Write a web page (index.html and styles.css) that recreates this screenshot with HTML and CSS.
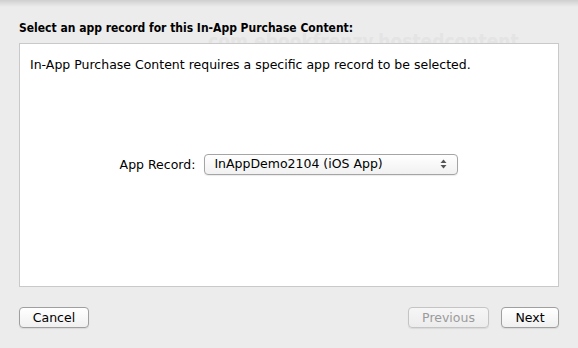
FILE: index.html
```html
<!DOCTYPE html>
<html lang="en">
<head>
    <meta charset="UTF-8">
    <title>Select App Record</title>
    <link rel="stylesheet" href="styles.css">
</head>
<body>
    <div class="ghost">com.ebookfrenzy.hostedcontent</div>
    <div class="sheet">
        <h1 class="title">Select an app record for this In-App Purchase Content:</h1>

        <div class="panel">
            <p class="intro">In-App Purchase Content requires a specific app record to be selected.</p>

            <div class="field">
                <label class="field-label">App Record:</label>
                <div class="popup">
                    <span class="popup-value">InAppDemo2104 (iOS App)</span>
                    <svg class="popup-arrows" width="7" height="10" viewBox="0 0 7 10">
                        <path d="M3.5 0.5 L6.5 4 L0.5 4 Z" fill="#555"/>
                        <path d="M0.5 6 L6.5 6 L3.5 9.5 Z" fill="#555"/>
                    </svg>
                </div>
            </div>
        </div>

        <div class="footer">
            <button class="btn btn-cancel">Cancel</button>
            <div class="nav">
                <button class="btn btn-prev" disabled>Previous</button>
                <button class="btn btn-next">Next</button>
            </div>
        </div>
    </div>
</body>
</html>
```

FILE: styles.css
```css
body {
    margin: 0;
    height: 348px;
    overflow: hidden;
    background: #ececec;
    font-family: 'DejaVu Sans', sans-serif;
    font-size: 12.5px;
    color: #000;
    position: relative;
}
body::before {
    content: '';
    position: absolute;
    top: 0;
    left: 0;
    right: 0;
    height: 7px;
    background: linear-gradient(#cfcfcf, rgba(236, 236, 236, 0));
}
.ghost {
    position: absolute;
    top: 30px;
    left: 208px;
    font-family: 'DejaVu Sans Condensed', 'DejaVu Sans', sans-serif;
    font-size: 19px;
    font-weight: bold;
    color: #e4e4e4;
}
.sheet {
    position: relative;
    padding: 0 19px;
}
.title {
    margin: 0;
    padding-top: 21px;
    height: 22px;
    font-family: 'DejaVu Sans Condensed', 'DejaVu Sans', sans-serif;
    font-size: 12px;
    font-weight: bold;
    line-height: 14px;
}
.panel {
    height: 242px;
    background: #fff;
    border: 1px solid #c9c9c9;
    display: flex;
    flex-direction: column;
}
.intro {
    margin: 0;
    padding: 14px 10px 0;
    line-height: 14px;
}
.field {
    flex: 1;
    display: flex;
    align-items: center;
    justify-content: center;
    gap: 9px;
    padding-bottom: 30px;
}
.popup {
    width: 233px;
    height: 19px;
    border: 1px solid #a5a5a5;
    border-radius: 4px;
    background: linear-gradient(#ffffff, #f1f1f1);
    box-shadow: 0 1px 1px rgba(0, 0, 0, 0.08);
    display: flex;
    align-items: center;
    justify-content: space-between;
    padding: 0 10px 0 9px;
}
.popup-value {
    line-height: 14px;
}
.footer {
    display: flex;
    justify-content: space-between;
    margin-top: 20px;
}
.nav {
    display: flex;
    gap: 12px;
}
.btn {
    height: 21px;
    padding: 0;
    font-family: inherit;
    font-size: 12.5px;
    color: #000;
    background: linear-gradient(#ffffff, #f0f0f0);
    border: 1px solid #9f9f9f;
    border-radius: 4px;
    box-shadow: 0 1px 1px rgba(0, 0, 0, 0.08);
}
.btn-cancel {
    width: 70px;
}
.btn-prev {
    width: 81px;
}
.btn-next {
    width: 58px;
}
.btn:disabled {
    color: #9b9b9b;
    border-color: #c4c4c4;
    background: linear-gradient(#f6f6f6, #ececec);
}
```
